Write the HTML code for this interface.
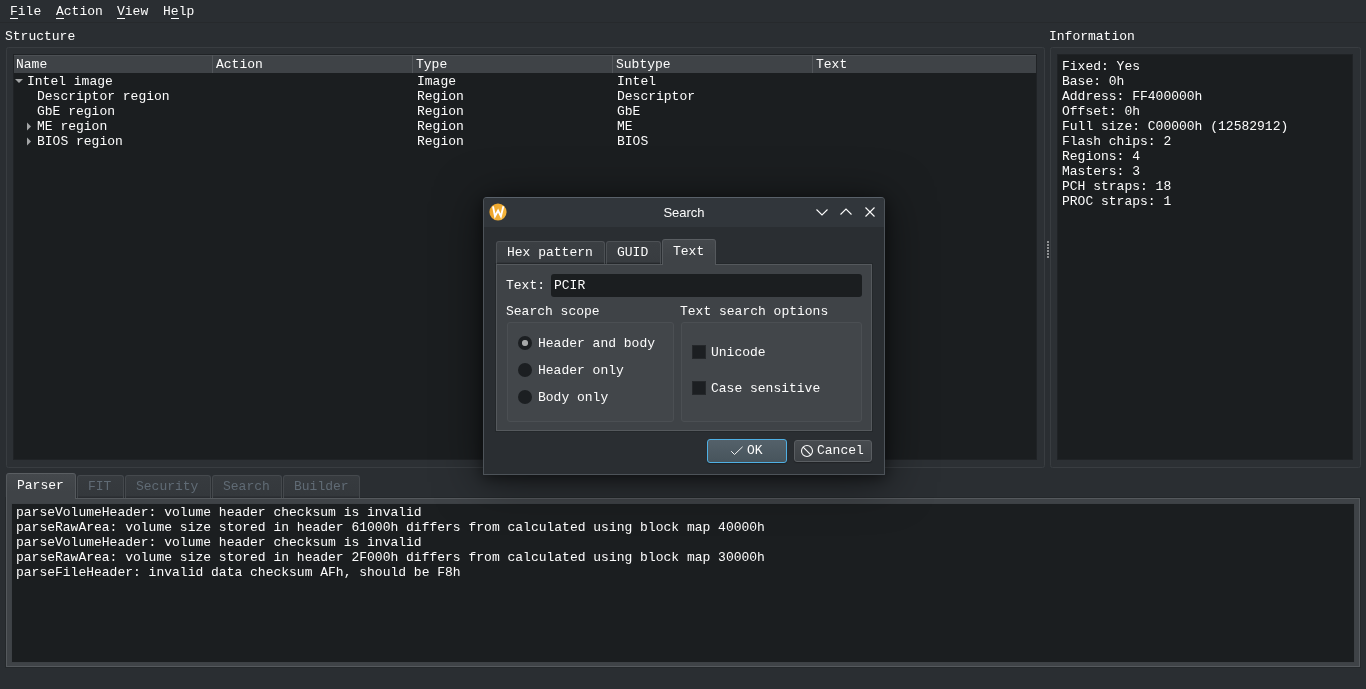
<!DOCTYPE html>
<html><head><meta charset="utf-8"><title>UEFITool</title>
<style>
html,body{margin:0;padding:0;}
html{background:#2a2e32}
body{width:1366px;height:689px;overflow:hidden;position:relative;will-change:transform;
 font-family:"Liberation Mono",monospace;font-size:13px;line-height:15px;color:#fcfcfc;}
div,span{position:absolute;box-sizing:border-box;white-space:pre;}
.menubar{left:0;top:0;width:1366px;height:23px;background:#2a2e32;border-bottom:1px solid #26292c}
.menubar span{top:4px;}
u{text-decoration:none;border-bottom:1px solid #fcfcfc;display:inline-block;line-height:15px;height:14px;vertical-align:top}
.lbl{height:15px;}
.group{background:#2c3034;border:1px solid #393d41;border-radius:2.5px;}
.view{background:#1b1e20;border:1px solid #202326;}
.hdr{background:#3f4347;height:18px;top:0;border-top:1px solid #4c5054}
.hdr span{top:1px}
.sep{width:1px;top:-1px;height:18px;background:#53575b}
.row{height:15px;left:0;}
.tab{height:23px;top:475px;background:linear-gradient(#373b3f,#34383c calc(100% - 2px),#292c30 calc(100% - 1px));border:1px solid #45494d;border-bottom:none;border-radius:3px 3px 0 0;color:#606b75;}
.tab span{top:3px}
.dtab{background:linear-gradient(#3b3f43,#383c40 calc(100% - 3px),#2b2e32 calc(100% - 2px));border:1px solid #4d5155;border-bottom:none;border-radius:3px 3px 0 0}
.dtab.sel{background:linear-gradient(#44484c,#3f4347 70%);border-color:#5a5e62 #55595d}
.pane{background:#3f4347;border:1px solid #55595d;box-shadow:0 0 0 1px rgba(0,0,0,.12)}
.dgroup{background:#42464a;border:1px solid #4b4f53;border-radius:3px}
.radio{width:14px;height:14px;border-radius:50%;background:#1c1f22;}
.radio i{position:absolute;left:3.6px;top:3.6px;width:6.8px;height:6.8px;border-radius:50%;background:radial-gradient(circle,#a6a8a9 55%,#c4c5c6 75%)}
.chk{width:14px;height:14px;background:#1c1f22;border:1px solid #25282b}
.btn{background:linear-gradient(#474b4f,#3d4145);border:1px solid #5a5e62;border-radius:3px;box-shadow:0 1px 1px rgba(0,0,0,.25)}
.btn.ok{background:linear-gradient(#54616a,#47545c);border:1px solid #4fb0e4;}
</style></head><body>

<div class="menubar">
<span style="left:10px"><u>F</u>ile</span>
<span style="left:56px"><u>A</u>ction</span>
<span style="left:117px"><u>V</u>iew</span>
<span style="left:163px">H<u>e</u>lp</span>
</div>

<span class="lbl" style="left:5px;top:29px">Structure</span>
<span class="lbl" style="left:1049px;top:29px">Information</span>

<div class="group" style="left:6px;top:47px;width:1039px;height:421px"></div>
<div class="view" id="tree" style="left:13px;top:54px;width:1024px;height:406px">
 <div class="hdr" style="left:0;width:1022px">
  <span style="left:2px">Name</span><div class="sep" style="left:198px"></div>
  <span style="left:202px">Action</span><div class="sep" style="left:398px"></div>
  <span style="left:402px">Type</span><div class="sep" style="left:598px"></div>
  <span style="left:602px">Subtype</span><div class="sep" style="left:798px"></div>
  <span style="left:802px">Text</span>
 </div>
<svg style="position:absolute;left:0;top:18px" width="30" height="80" viewBox="0 18 30 80" fill="#a3a5a6"><path d="M1 24 L9 24 L5 28 Z"/><path d="M13 67.5 L17 71.5 L13 75.5 Z"/><path d="M13 82.5 L17 86.5 L13 90.5 Z"/></svg>
 <span class="row" style="top:19px;left:13px">Intel image</span><span class="row" style="top:19px;left:403px">Image</span><span class="row" style="top:19px;left:603px">Intel</span>
 <span class="row" style="top:34px;left:23px">Descriptor region</span><span class="row" style="top:34px;left:403px">Region</span><span class="row" style="top:34px;left:603px">Descriptor</span>
 <span class="row" style="top:49px;left:23px">GbE region</span><span class="row" style="top:49px;left:403px">Region</span><span class="row" style="top:49px;left:603px">GbE</span>
 <span class="row" style="top:64px;left:23px">ME region</span><span class="row" style="top:64px;left:403px">Region</span><span class="row" style="top:64px;left:603px">ME</span>
 <span class="row" style="top:79px;left:23px">BIOS region</span><span class="row" style="top:79px;left:403px">Region</span><span class="row" style="top:79px;left:603px">BIOS</span>
</div>

<div class="group" style="left:1050px;top:47px;width:311px;height:421px"></div>
<div class="view" id="info" style="left:1057px;top:54px;width:296px;height:406px">
<span style="left:4px;top:4px">Fixed: Yes
Base: 0h
Address: FF400000h
Offset: 0h
Full size: C00000h (12582912)
Flash chips: 2
Regions: 4
Masters: 3
PCH straps: 18
PROC straps: 1</span>
</div>

<div style="left:1047px;top:241px;width:2px;height:2px;background:#8e9092"></div><div style="left:1047px;top:244px;width:2px;height:2px;background:#8e9092"></div><div style="left:1047px;top:247px;width:2px;height:2px;background:#8e9092"></div><div style="left:1047px;top:250px;width:2px;height:2px;background:#8e9092"></div><div style="left:1047px;top:253px;width:2px;height:2px;background:#8e9092"></div><div style="left:1047px;top:256px;width:2px;height:2px;background:#8e9092"></div>
<!-- bottom tabs -->
<div class="pane" style="left:6px;top:498px;width:1354px;height:169px;"></div>
<div class="tab" style="left:6px;top:473px;width:70px;height:26px;background:linear-gradient(#44484c,#3f4347 70%);color:#fcfcfc;border-color:#5a5e62 #55595d"><span style="left:10px;top:4px">Parser</span></div>
<div class="tab" style="left:77px;width:47px"><span style="left:10px">FIT</span></div>
<div class="tab" style="left:125px;width:86px"><span style="left:10px">Security</span></div>
<div class="tab" style="left:212px;width:70px"><span style="left:10px">Search</span></div>
<div class="tab" style="left:283px;width:77px"><span style="left:10px">Builder</span></div>
<div class="view" id="log" style="left:11px;top:503px;width:1344px;height:160px;border-color:#3d4145">
<span style="left:4px;top:1px">parseVolumeHeader: volume header checksum is invalid
parseRawArea: volume size stored in header 61000h differs from calculated using block map 40000h
parseVolumeHeader: volume header checksum is invalid
parseRawArea: volume size stored in header 2F000h differs from calculated using block map 30000h
parseFileHeader: invalid data checksum AFh, should be F8h</span>
</div>

<!-- dialog -->
<div id="dlg" style="left:483px;top:197px;width:402px;height:278px;background:#2a2e32;border:1px solid #4d5359;border-top-color:#59616a;border-radius:4px 4px 0 0;box-shadow:0 5px 45px 2px rgba(0,0,0,.5),0 3px 14px rgba(0,0,0,.45)">
 <div style="left:0;top:0;width:400px;height:29px;background:#31363b;border-radius:3px 3px 0 0"></div>
 <svg style="position:absolute;left:4px;top:3.8px" width="20" height="20" viewBox="0 0 20 20"><defs><linearGradient id="og" x1="0" y1="0" x2="1" y2="0.3"><stop offset="0" stop-color="#eda227"/><stop offset="1" stop-color="#f2b33a"/></linearGradient></defs><circle cx="10" cy="10" r="8.6" fill="url(#og)"/><path d="M5 4.4 L7 14.3 L10.1 8.6 L12.9 14.3 L15.4 4.2" fill="none" stroke="#fff" stroke-width="1.9" stroke-linejoin="miter" stroke-miterlimit="10" stroke-linecap="butt"/></svg>
 <span style="left:0;width:400px;top:7px;text-align:center;font-family:'Liberation Sans',sans-serif;font-size:13px">Search</span>
 <svg style="position:absolute;left:330px;top:6px" width="66" height="18" viewBox="0 0 66 18" fill="none" stroke="#fcfcfc" stroke-width="1.1"><path d="M2.5 5.5 L8 11 L13.5 5.5"/><path d="M26.5 10.5 L32 5 L37.5 10.5"/><path d="M51.5 3.5 L60.5 12.5 M60.5 3.5 L51.5 12.5"/></svg>

 <!-- tabs -->
 <div class="dtab" style="left:12px;top:43px;width:109px;height:24px"><span style="left:10px;top:3px">Hex pattern</span></div>
 <div class="dtab" style="left:122px;top:43px;width:55px;height:24px"><span style="left:10px;top:3px">GUID</span></div>
 <div class="pane" style="left:12px;top:66px;width:376px;height:167px"></div>
 <div class="dtab sel" style="left:178px;top:41px;width:54px;height:26px"><span style="left:10px;top:4px">Text</span></div>

 <span style="left:22px;top:80px">Text:</span>
 <div style="left:67px;top:76px;width:311px;height:23px;background:#1b1e20;border-radius:3px"><span style="left:3px;top:4px">PCIR</span></div>
 <span style="left:22px;top:106px">Search scope</span>
 <span style="left:196px;top:106px">Text search options</span>
 <div class="dgroup" style="left:23px;top:124px;width:167px;height:100px"></div>
 <div class="dgroup" style="left:197px;top:124px;width:181px;height:100px"></div>
 <div class="radio" style="left:34px;top:138px"><i></i></div><span style="left:54px;top:138px">Header and body</span>
 <div class="radio" style="left:34px;top:165px"></div><span style="left:54px;top:165px">Header only</span>
 <div class="radio" style="left:34px;top:192px"></div><span style="left:54px;top:192px">Body only</span>
 <div class="chk" style="left:208px;top:147px"></div><span style="left:227px;top:147px">Unicode</span>
 <div class="chk" style="left:208px;top:183px"></div><span style="left:227px;top:183px">Case sensitive</span>

 <div class="btn ok" style="left:223px;top:241px;width:80px;height:24px"><svg style="position:absolute;left:22px;top:3px" width="14" height="14" viewBox="0 0 14 14" fill="none" stroke="#f4f5f5" stroke-width="1"><path d="M1.2 8.2 L4.5 11.5 L12.6 3.8"/></svg><span style="left:39px;top:3px">OK</span></div>
 <div class="btn" style="left:310px;top:242px;width:78px;height:22px"><svg style="position:absolute;left:5px;top:3px" width="14" height="14" viewBox="0 0 14 14" fill="none" stroke="#fcfcfc" stroke-width="1.1"><circle cx="7" cy="7" r="5.5"/><path d="M3.2 3.2 L10.8 10.8"/></svg><span style="left:22px;top:2px">Cancel</span></div>
</div>

</body></html>
